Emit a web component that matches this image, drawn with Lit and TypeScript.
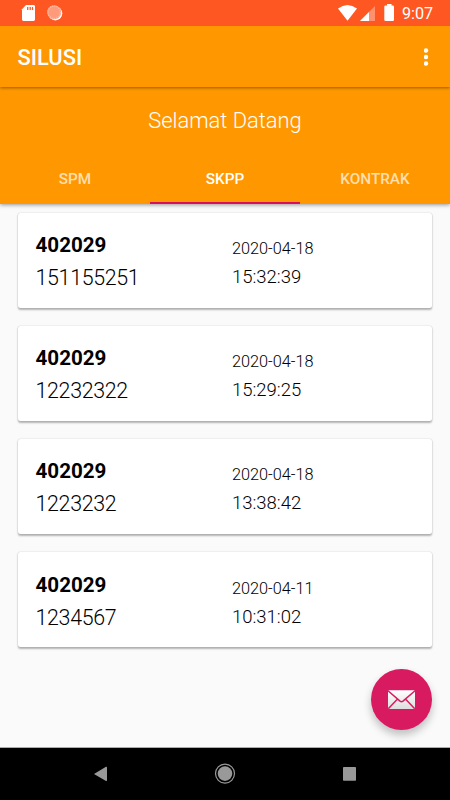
import { LitElement, html, css } from "lit";
import { customElement, property } from "lit/decorators.js";

interface Entry {
  code: string;
  number: string;
  date: string;
  time: string;
}

const ENTRIES: Entry[] = [
  { code: "402029", number: "151155251", date: "2020-04-18", time: "15:32:39" },
  { code: "402029", number: "12232322", date: "2020-04-18", time: "15:29:25" },
  { code: "402029", number: "1223232", date: "2020-04-18", time: "13:38:42" },
  { code: "402029", number: "1234567", date: "2020-04-11", time: "10:31:02" },
];

@customElement("entry-card")
export class EntryCard extends LitElement {
  @property({ attribute: false }) entry!: Entry;

  static styles = css`
    :host {
      display: grid;
      grid-template-columns: 196.4px 1fr;
      box-sizing: border-box;
      height: 95px;
      padding: 18.3px 17.5px 0;
      background: #fff;
      border-radius: 2.5px;
      box-shadow: 0 1.5px 2px rgba(0, 0, 0, 0.28), 0 0 1.5px rgba(0, 0, 0, 0.18);
      color: #000;
      font-weight: 300;
    }
    .code {
      font-weight: 700;
      font-size: 20.6px;
      line-height: 28px;
    }
    .number {
      font-size: 21.4px;
      letter-spacing: -0.32px;
      line-height: 28px;
      margin-top: 5px;
    }
    .date {
      font-size: 16.3px;
      line-height: 22px;
      margin-top: 7px;
    }
    .time {
      font-size: 18.5px;
      line-height: 24px;
      margin-top: 5px;
    }
  `;

  render() {
    return html`
      <div>
        <div class="code">${this.entry.code}</div>
        <div class="number">${this.entry.number}</div>
      </div>
      <div>
        <div class="date">${this.entry.date}</div>
        <div class="time">${this.entry.time}</div>
      </div>
    `;
  }
}

@customElement("app-root")
export class AppRoot extends LitElement {
  static styles = css`
    :host {
      display: flex;
      flex-direction: column;
      position: relative;
      width: 450px;
      height: 800px;
      overflow: hidden;
      background: #fafafa;
      font-family: Roboto, "Liberation Sans", sans-serif;
    }
    svg {
      display: block;
    }
    .status {
      flex: none;
      height: 26px;
      background: #ff5722;
    }
    .clock {
      font-size: 16.2px;
      fill: #fff;
    }
    .appbar {
      flex: none;
      display: flex;
      align-items: center;
      justify-content: space-between;
      box-sizing: border-box;
      height: 61px;
      padding: 2px 21.5px 0 17.5px;
      background: #ff9800;
      box-shadow: 0 1px 3px rgba(0, 0, 0, 0.4);
      clip-path: inset(0 0 -8px 0);
      z-index: 2;
    }
    .title {
      color: #fff;
      font-size: 21.9px;
      font-weight: 500;
    }
    .header {
      flex: none;
      height: 117px;
      background: #ff9800;
      box-shadow: 0 1px 4px rgba(0, 0, 0, 0.4);
      z-index: 1;
    }
    .welcome {
      height: 65px;
      line-height: 68px;
      text-align: center;
      color: #fff;
      font-size: 21.9px;
      font-weight: 300;
    }
    .tabs {
      display: grid;
      grid-template-columns: repeat(3, 1fr);
      height: 52px;
    }
    .tab {
      box-sizing: border-box;
      height: 52px;
      text-align: center;
      line-height: 54px;
      font-size: 15.3px;
      font-weight: 500;
      color: rgba(255, 255, 255, 0.7);
    }
    .active {
      color: #fff;
      box-shadow: inset 0 -2px #d8105c;
    }
    .list {
      flex: 1;
      display: flex;
      flex-direction: column;
      gap: 18.25px;
      padding: 8.7px 17.6px 0 18px;
    }
    .nav {
      flex: none;
      height: 52px;
      background: #000;
      box-shadow: 0 -1px #aaa;
    }
    .fab {
      position: absolute;
      right: 17.8px;
      bottom: 70px;
      width: 61px;
      height: 61px;
      border-radius: 50%;
      background: #d81b60;
      box-shadow: 0 5px 9px rgba(0, 0, 0, 0.24);
    }
  `;

  render() {
    return html`
      <div class="status">
        <svg width="450" height="26" viewBox="0 0 450 26">
          <path fill="#fff" d="M26 5h7.6q1.400 0 1.400 1.400v13.200q0 1.400-1.400 1.400h-10.200q-1.400 0-1.400-1.400V9.200z" />
          <path stroke="#ff5722" stroke-width="1.300" d="M27.700 7v3M30.200 7v3M32.500 7v3" />
          <circle cx="55.300" cy="13.400" r="7" fill="#fff" />
          <circle cx="54.200" cy="12.300" r="7" fill="#ff9b7b" />
          <circle cx="54.200" cy="12.300" r="6.200" fill="none" stroke="#ffc4b1" stroke-width="1.200" stroke-dasharray="1.100 1.100" />
          <path fill="#fff" d="M338 8.500Q347.500 1.300 357 8.500L347.500 20.800z" />
          <path fill="#fff" fill-opacity=".35" d="M375 6v15H360z" />
          <path fill="#fff" d="M369 12v9h-9z" />
          <path fill="#fff" d="M387 4h4.500v1.500h1.300q1.200 0 1.200 1.200v13q0 1.300-1.200 1.300h-7.300q-1.200 0-1.200-1.300v-13q0-1.200 1.200-1.200h1.500z" />
          <text class="clock" x="402" y="19.300">9:07</text>
        </svg>
      </div>
      <div class="appbar">
        <div class="title">SILUSI</div>
        <svg width="5" height="20" viewBox="0 0 5 20" fill="#fff">
          <circle cx="2" cy="2.500" r="2.200" />
          <circle cx="2" cy="9" r="2.200" />
          <circle cx="2" cy="15.500" r="2.200" />
        </svg>
      </div>
      <div class="header">
        <div class="welcome">Selamat Datang</div>
        <div class="tabs">
          <div class="tab">SPM</div>
          <div class="tab active">SKPP</div>
          <div class="tab">KONTRAK</div>
        </div>
      </div>
      <div class="list">
        ${ENTRIES.map((e) => html`<entry-card .entry=${e}></entry-card>`)}
      </div>
      <div class="nav">
        <svg width="450" height="52" viewBox="0 0 450 52" fill="#999">
          <path d="M94 25.900L106 18.800Q107 18.500 107 19.500V32.300Q107 33.300 106 33z" />
          <circle cx="225" cy="25.600" r="7.300" />
          <circle cx="225" cy="25.600" r="9.500" fill="none" stroke="#999" stroke-width="1.200" />
          <rect x="343" y="19" width="13" height="13.700" rx=".8" />
        </svg>
      </div>
      <div class="fab">
        <svg width="61" height="61" viewBox="0 0 61 61">
          <defs>
            <linearGradient id="paper" x1="0" y1="0" x2="0" y2="1">
              <stop offset="0" stop-color="#fff" />
              <stop offset="1" stop-color="#ddd" />
            </linearGradient>
          </defs>
          <rect x="17" y="21.300" width="27" height="18.800" rx="1.200" fill="url(#paper)" />
          <path fill="none" stroke="#d81b60" stroke-width="1.500" d="M17 21.800L29 32.100Q30.500 33.200 32 32.100L44 21.800M17.300 39.800L26.300 30.200M43.700 39.800L34.700 30.200" />
        </svg>
      </div>
    `;
  }
}
